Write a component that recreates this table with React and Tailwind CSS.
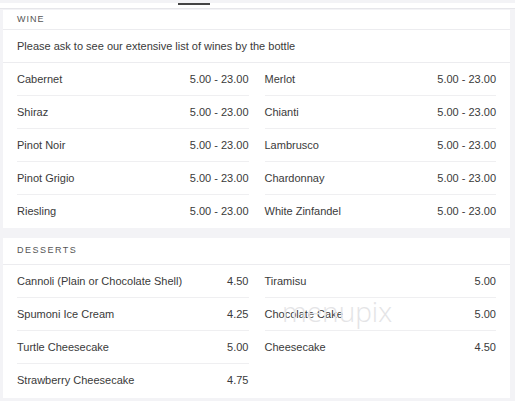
export default function App() {
  const wines = [
    ["Cabernet", "5.00 - 23.00", "Merlot", "5.00 - 23.00"],
    ["Shiraz", "5.00 - 23.00", "Chianti", "5.00 - 23.00"],
    ["Pinot Noir", "5.00 - 23.00", "Lambrusco", "5.00 - 23.00"],
    ["Pinot Grigio", "5.00 - 23.00", "Chardonnay", "5.00 - 23.00"],
    ["Riesling", "5.00 - 23.00", "White Zinfandel", "5.00 - 23.00"],
  ];
  const dessertsL = [
    ["Cannoli (Plain or Chocolate Shell)", "4.50"],
    ["Spumoni Ice Cream", "4.25"],
    ["Turtle Cheesecake", "5.00"],
    ["Strawberry Cheesecake", "4.75"],
  ];
  const dessertsR = [
    ["Tiramisu", "5.00"],
    ["Chocolate Cake", "5.00"],
    ["Cheesecake", "4.50"],
  ];
  const winesL = wines.map((w) => [w[0], w[1]]);
  const winesR = wines.map((w) => [w[2], w[3]]);

  const Col = ({ items }) => (
    <div className="flex flex-col">
      {items.map(([n, p], i) => (
        <div
          key={n}
          className={
            "flex h-[33px] items-center justify-between " +
            (i < items.length - 1 ? "border-b border-[#efeff1]" : "")
          }
        >
          <span>{n}</span>
          <span>{p}</span>
        </div>
      ))}
    </div>
  );

  return (
    <div
      className="h-[401px] w-[515px] overflow-hidden bg-[#f3f3f6] text-[11px] text-[#3a3a3a]"
      style={{ fontFamily: '"Liberation Sans", Arial, sans-serif' }}
    >
      <div className="h-[6px] border-b border-[#e6e6ea] bg-white pl-[178px] pr-[4px]">
        <div className="mt-[3px] h-[2px] w-[32px] bg-[#444]" />
      </div>
      <div className="ml-[3px] mr-[5px] mt-px bg-white">
        <div className="flex h-[20px] items-center border-b border-[#ececef] px-[14px] text-[9px] tracking-[1px] text-[#555]">
          WINE
        </div>
        <div className="flex h-[33px] items-center border-b border-[#ececef] px-[14px]">
          Please ask to see our extensive list of wines by the bottle
        </div>
        <div className="grid grid-cols-2 gap-4 px-[14px]">
          <Col items={winesL} />
          <Col items={winesR} />
        </div>
      </div>
      <div className="relative ml-[3px] mr-[5px] mt-[10px] bg-white pb-px">
        <div className="flex h-[27px] items-center border-b border-[#ececef] px-[14px] text-[9px] tracking-[1.5px] text-[#555]">
          DESSERTS
        </div>
        <div className="grid grid-cols-2 gap-4 px-[14px]">
          <Col items={dessertsL} />
          <Col items={dessertsR} />
        </div>
        <div
          className="pointer-events-none absolute left-[279px] top-[59px] text-[28px] leading-none text-[#e4e4e6]"
          style={{ fontFamily: '"Open Sans", sans-serif', fontWeight: 300 }}
        >
          menupix
        </div>
      </div>
    </div>
  );
}
